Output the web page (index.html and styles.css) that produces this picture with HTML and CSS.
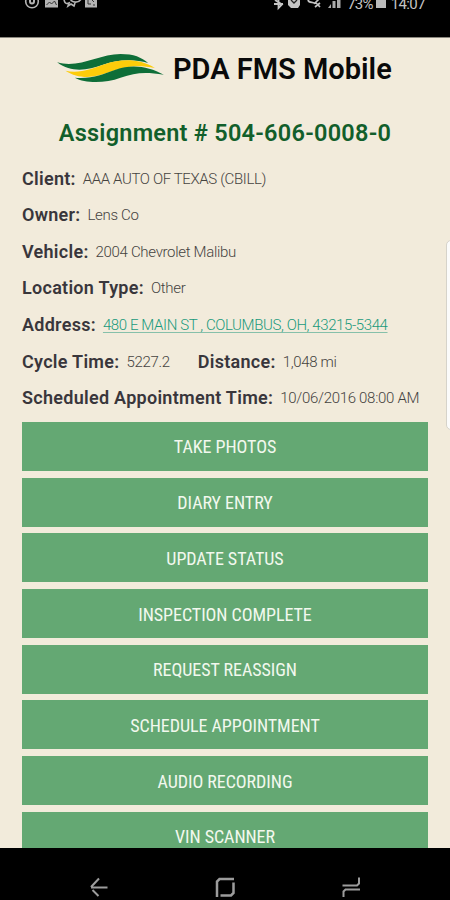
FILE: index.html
```html
<!DOCTYPE html>
<html lang="en">
<head>
  <meta charset="UTF-8">
  <title>PDA FMS Mobile</title>
  <meta name="viewport" content="width=device-width, initial-scale=1.0">
  <link rel="stylesheet" href="styles.css">
</head>
<body>

  <div class="status-bar">
    <svg class="status-left" width="76" height="12" viewBox="0 0 76 12" fill="none" stroke="#b4b4b4">
      <circle cx="8" cy="1.5" r="6.3" stroke-width="1.6"/>
      <path d="M6 -2v3.500a2 2 0 0 0 4 0V-2" stroke-width="2"/>
      <path d="M21 -4h13V7.500H21z" fill="#b4b4b4" stroke="none"/>
      <path d="M22.500 5l3-3 2 2 3-3 2 4" stroke="#333" stroke-width="1"/>
      <path d="M40 0c1 4 3 4 5 3l-1 3 3-2 3 2 1-3" stroke-width="1.600"/>
      <path d="M46 -3c0 7 11 7 12 -1" stroke-width="1.600"/>
      <path d="M61 -4h12V7.500H61z" fill="#b4b4b4" stroke="none"/>
      <path d="M64 0v4h3M67 -1l3 3M69 5h2" stroke="#333" stroke-width="1"/>
    </svg>
    <div class="status-right">
      <svg width="70" height="12" viewBox="0 0 70 12" fill="none" stroke="#c4c4c4">
        <path d="M1 4h9M5.500 -4V8L9 4.500 2 0" stroke-width="1.800"/>
        <path d="M15 -3h12V5l-2 3h-7l-3-3z" fill="#c4c4c4" stroke="none"/>
        <path d="M18 0l3 3 3-3" stroke="#222" stroke-width="1.300"/>
        <path d="M35 0c1 4 6 1 7 4M42 -3l3 3-3 3M42 7l5-4M43 3l4 4" stroke-width="1.700"/>
        <path d="M55 8h3V4zM59.500 8h3V1h-3zM64 8h3.500V-4H64z" fill="#aaa" stroke="none"/>
      </svg>
      <span>73%</span>
      <i class="battery"></i>
      <span class="clock">14:07</span>
    </div>
  </div>

  <main class="screen">
    <header class="brand">
      <svg class="logo" width="107" height="30" viewBox="15 12 320 90">
        <path fill="#0e6e38" d="M15 40C80 60 140 15 205 15C245 15 268 25 288 42C240 28 190 34 150 48C110 62 60 74 15 40z"/>
        <path fill="#fdcc0a" d="M40 65C80 76 120 58 160 45C210 28 265 30 308 57C250 45 210 55 170 70C130 86 80 92 40 65z"/>
        <path fill="#0e6e38" d="M68 86C120 90 150 76 190 62C240 44 290 52 335 77C280 68 250 70 205 86C160 103 100 104 68 86z"/>
      </svg>
      <h1>PDA FMS Mobile</h1>
    </header>

    <h2>Assignment # 504-606-0008-0</h2>

    <div class="details">
      <p><b>Client:</b><span class="client">AAA AUTO OF TEXAS (CBILL)</span></p>
      <p><b>Owner:</b><span>Lens Co</span></p>
      <p><b>Vehicle:</b><span>2004 Chevrolet Malibu</span></p>
      <p><b>Location Type:</b><span>Other</span></p>
      <p><b>Address:</b><a href="#">480 E MAIN ST , COLUMBUS, OH, 43215-5344</a></p>
      <p><b>Cycle Time:</b><span>5227.2</span><b class="distance">Distance:</b><span>1,048 mi</span></p>
      <p><b>Scheduled Appointment Time:</b><span class="date">10/06/2016 08:00 AM</span></p>
    </div>

    <div class="actions">
      <button><span>TAKE PHOTOS</span></button>
      <button><span>DIARY ENTRY</span></button>
      <button><span>UPDATE STATUS</span></button>
      <button><span>INSPECTION COMPLETE</span></button>
      <button><span>REQUEST REASSIGN</span></button>
      <button><span>SCHEDULE APPOINTMENT</span></button>
      <button><span>AUDIO RECORDING</span></button>
      <button><span>VIN SCANNER</span></button>
    </div>

    <div class="edge-handle"></div>
  </main>

  <nav class="nav-bar">
    <svg width="20" height="20" viewBox="0 0 20 20">
      <path d="M2 10.500h16.500M10 1.500L2 10M3.500 13l6 6"/>
    </svg>
    <svg class="home" width="20" height="20" viewBox="0 0 20 20">
      <path d="M2 20V4.500L4.500 2H19M18.500 5.500V16l-2.500 2.500H5.500"/>
    </svg>
    <svg width="20" height="20" viewBox="0 0 20 20">
      <path d="M1.500 8.500H16l2-2V.5M2.500 20v-5.500l2-2H19"/>
    </svg>
  </nav>

</body>
</html>
```

FILE: styles.css
```css
* { box-sizing: border-box; margin: 0; padding: 0; }
body {
  font-family: Roboto, "Liberation Sans", sans-serif;
  background: #000;
  height: 900px;
  display: flex;
  flex-direction: column;
  overflow: hidden;
}

.status-bar {
  height: 37px;
  flex: none;
  display: flex;
  justify-content: space-between;
  align-items: flex-start;
  padding: 0 25px 0 24px;
  color: #c4c4c4;
  font-size: 15px;
  line-height: 18px;
  overflow: hidden;
}
.status-right {
  display: flex;
  align-items: flex-start;
}
.status-right span {
  margin-top: -5px;
  letter-spacing: -0.8px;
}
.status-right svg {
  margin-right: 4px;
}
.battery {
  width: 10px;
  height: 8px;
  margin: 0 5px 0 3px;
  background: #bbb;
}
.status-right .clock {
  letter-spacing: -0.6px;
}

.screen {
  position: relative;
  height: 811px;
  flex: none;
  padding: 0 22px;
  background: #f2ebdb;
  border-top: 1px solid #8a877e;
  overflow: hidden;
}

.brand {
  display: flex;
  align-items: center;
  height: 62px;
  padding-left: 35px;
}
.logo {
  margin-right: 9px;
  margin-top: -3px;
}
h1 {
  font-size: 29px;
  font-weight: 600;
  color: #0a0a0a;
  white-space: nowrap;
}
h2 {
  height: 60.400px;
  line-height: 66px;
  font-size: 23.500px;
  font-weight: 600;
  letter-spacing: 0.25px;
  color: #125f2b;
  text-align: center;
  white-space: nowrap;
}

.details p {
  height: 36.600px;
  display: flex;
  align-items: center;
  line-height: 36px;
  font-size: 15px;
  font-weight: 300;
  letter-spacing: -0.32px;
  color: #45433f;
  white-space: nowrap;
}
.details b {
  margin-right: 7px;
  font-size: 18px;
  font-weight: 600;
  letter-spacing: 0.28px;
  color: #39363b;
}
.details a {
  letter-spacing: -0.4px;
  color: #199a7c;
  text-decoration: underline;
  text-decoration-color: #86c0aa;
  text-underline-offset: 2px;
}
.details .client {
  letter-spacing: -0.37px;
}
.details .date {
  letter-spacing: -0.3px;
}
.details .distance {
  margin-left: 28px;
}

.actions {
  display: flex;
  flex-direction: column;
  gap: 6.700px;
  margin-top: 5.400px;
}
.actions button {
  height: 49px;
  flex: none;
  padding-top: 1px;
  border: none;
  background: #64a873;
  color: #f2f8ee;
  font-family: "Roboto Condensed", Roboto, sans-serif;
  font-size: 18px;
  font-stretch: condensed;
  letter-spacing: -0.05px;
  cursor: pointer;
}

/* edge panel handle on the right side of the screen */
.edge-handle {
  position: absolute;
  right: -6px;
  top: 202px;
  width: 10px;
  height: 190px;
  background: #fbfbfa;
  border: 1px solid #d6d3ca;
  border-radius: 5px;
}

.nav-bar {
  flex: 1;
  display: flex;
  justify-content: space-between;
  padding: 29px 89px 0;
}
.nav-bar svg {
  fill: none;
  stroke: #9c9c9c;
  stroke-width: 2;
}
.nav-bar .home {
  stroke-width: 2.500;
}
```
